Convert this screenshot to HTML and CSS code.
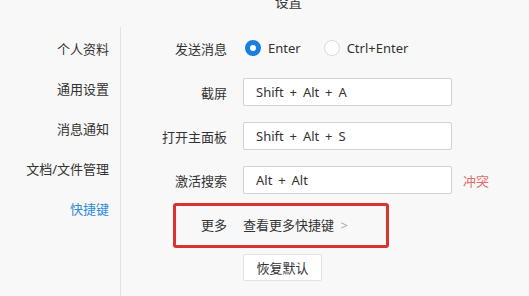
FILE: index.html
```html
<!DOCTYPE html>
<html lang="zh-CN">
<head>
    <meta charset="UTF-8" />
    <title>设置</title>
    <link rel="stylesheet" href="styles.css">
</head>
<body>
    <header class="top-bar">
        <span class="top-title">设置</span>
    </header>

    <div class="settings">
        <nav class="side-menu">
            <a class="side-item">个人资料</a>
            <a class="side-item">通用设置</a>
            <a class="side-item">消息通知</a>
            <a class="side-item">文档/文件管理</a>
            <a class="side-item active">快捷键</a>
        </nav>

        <section class="shortcut-panel">
            <div class="form-grid">
                <span class="row-label">发送消息</span>
                <div class="radio-group">
                    <label class="radio checked"><span class="radio-dot"></span>Enter</label>
                    <label class="radio"><span class="radio-dot"></span>Ctrl+Enter</label>
                </div>
                <span></span>

                <span class="row-label">截屏</span>
                <div class="key-input">Shift + Alt + A</div>
                <span></span>

                <span class="row-label">打开主面板</span>
                <div class="key-input">Shift + Alt + S</div>
                <span></span>

                <span class="row-label">激活搜索</span>
                <div class="key-input">Alt + Alt</div>
                <span class="conflict">冲突</span>

                <span class="row-label">更多</span>
                <a class="more-link">查看更多快捷键 <span class="chevron">&gt;</span></a>
                <span></span>

                <span></span>
                <div><button type="button" class="reset-btn">恢复默认</button></div>
                <span></span>
            </div>
            <div class="highlight"></div>
        </section>
    </div>
</body>
</html>
```

FILE: styles.css
```css
body {
    margin: 0;
    background: #f8f8f8;
    font-family: "Noto Sans", "Noto Sans CJK SC", sans-serif;
    font-size: 13px;
    color: #333;
    height: 296px;
    overflow: hidden;
}

.top-bar {
    height: 27px;
    display: flex;
    align-items: flex-start;
    overflow: hidden;
}

.top-title {
    margin-top: -5px;
    padding-left: 275px;
    line-height: 14px;
    font-size: 13.5px;
}

.settings {
    display: flex;
    height: 269px;
}

.side-menu {
    width: 121px;
    border-right: 1px solid #e3e3e3;
    padding-top: 2px;
    box-sizing: border-box;
    flex-shrink: 0;
    display: flex;
    flex-direction: column;
}

.side-item {
    height: 40px;
    line-height: 40px;
    text-align: right;
    padding-right: 11px;
    color: #333;
}

.side-item.active {
    color: #2f8bd6;
}

.shortcut-panel {
    position: relative;
    flex: 1;
    padding-top: 7px;
}

.form-grid {
    display: grid;
    grid-template-columns: 106px 209px auto;
    grid-auto-rows: 28px;
    column-gap: 16px;
    row-gap: 16px;
    align-items: center;
}

.row-label {
    text-align: right;
}

.radio-group {
    display: flex;
    align-items: center;
}

.radio {
    display: flex;
    align-items: center;
    gap: 7px;
    margin-left: 2px;
    margin-right: 21px;
}

.radio-dot {
    width: 16px;
    height: 16px;
    border-radius: 50%;
    border: 1px solid #dadada;
    background: #fff;
    box-sizing: border-box;
}

.radio.checked .radio-dot {
    border: 5px solid #1a7de0;
}

.key-input {
    height: 28px;
    line-height: 26px;
    box-sizing: border-box;
    border: 1px solid #d2d2d2;
    border-radius: 2px;
    background: #fff;
    padding-left: 12px;
    word-spacing: 2.5px;
}

.conflict {
    color: #e26a6a;
    margin-left: -5px;
}

.more-link {
    color: #333;
}

.chevron {
    color: #aaa;
    padding-left: 3px;
}

.reset-btn {
    width: 79px;
    height: 27px;
    border: 1px solid #e2e2e2;
    border-radius: 2px;
    background: #fff;
    font-family: inherit;
    font-size: 13px;
    color: #333;
    padding: 0;
    margin-top: -1px;
}

.highlight {
    position: absolute;
    left: 52px;
    top: 176px;
    width: 216px;
    height: 45px;
    box-sizing: border-box;
    border: 3px solid #d83232;
    border-radius: 3px;
}
```
